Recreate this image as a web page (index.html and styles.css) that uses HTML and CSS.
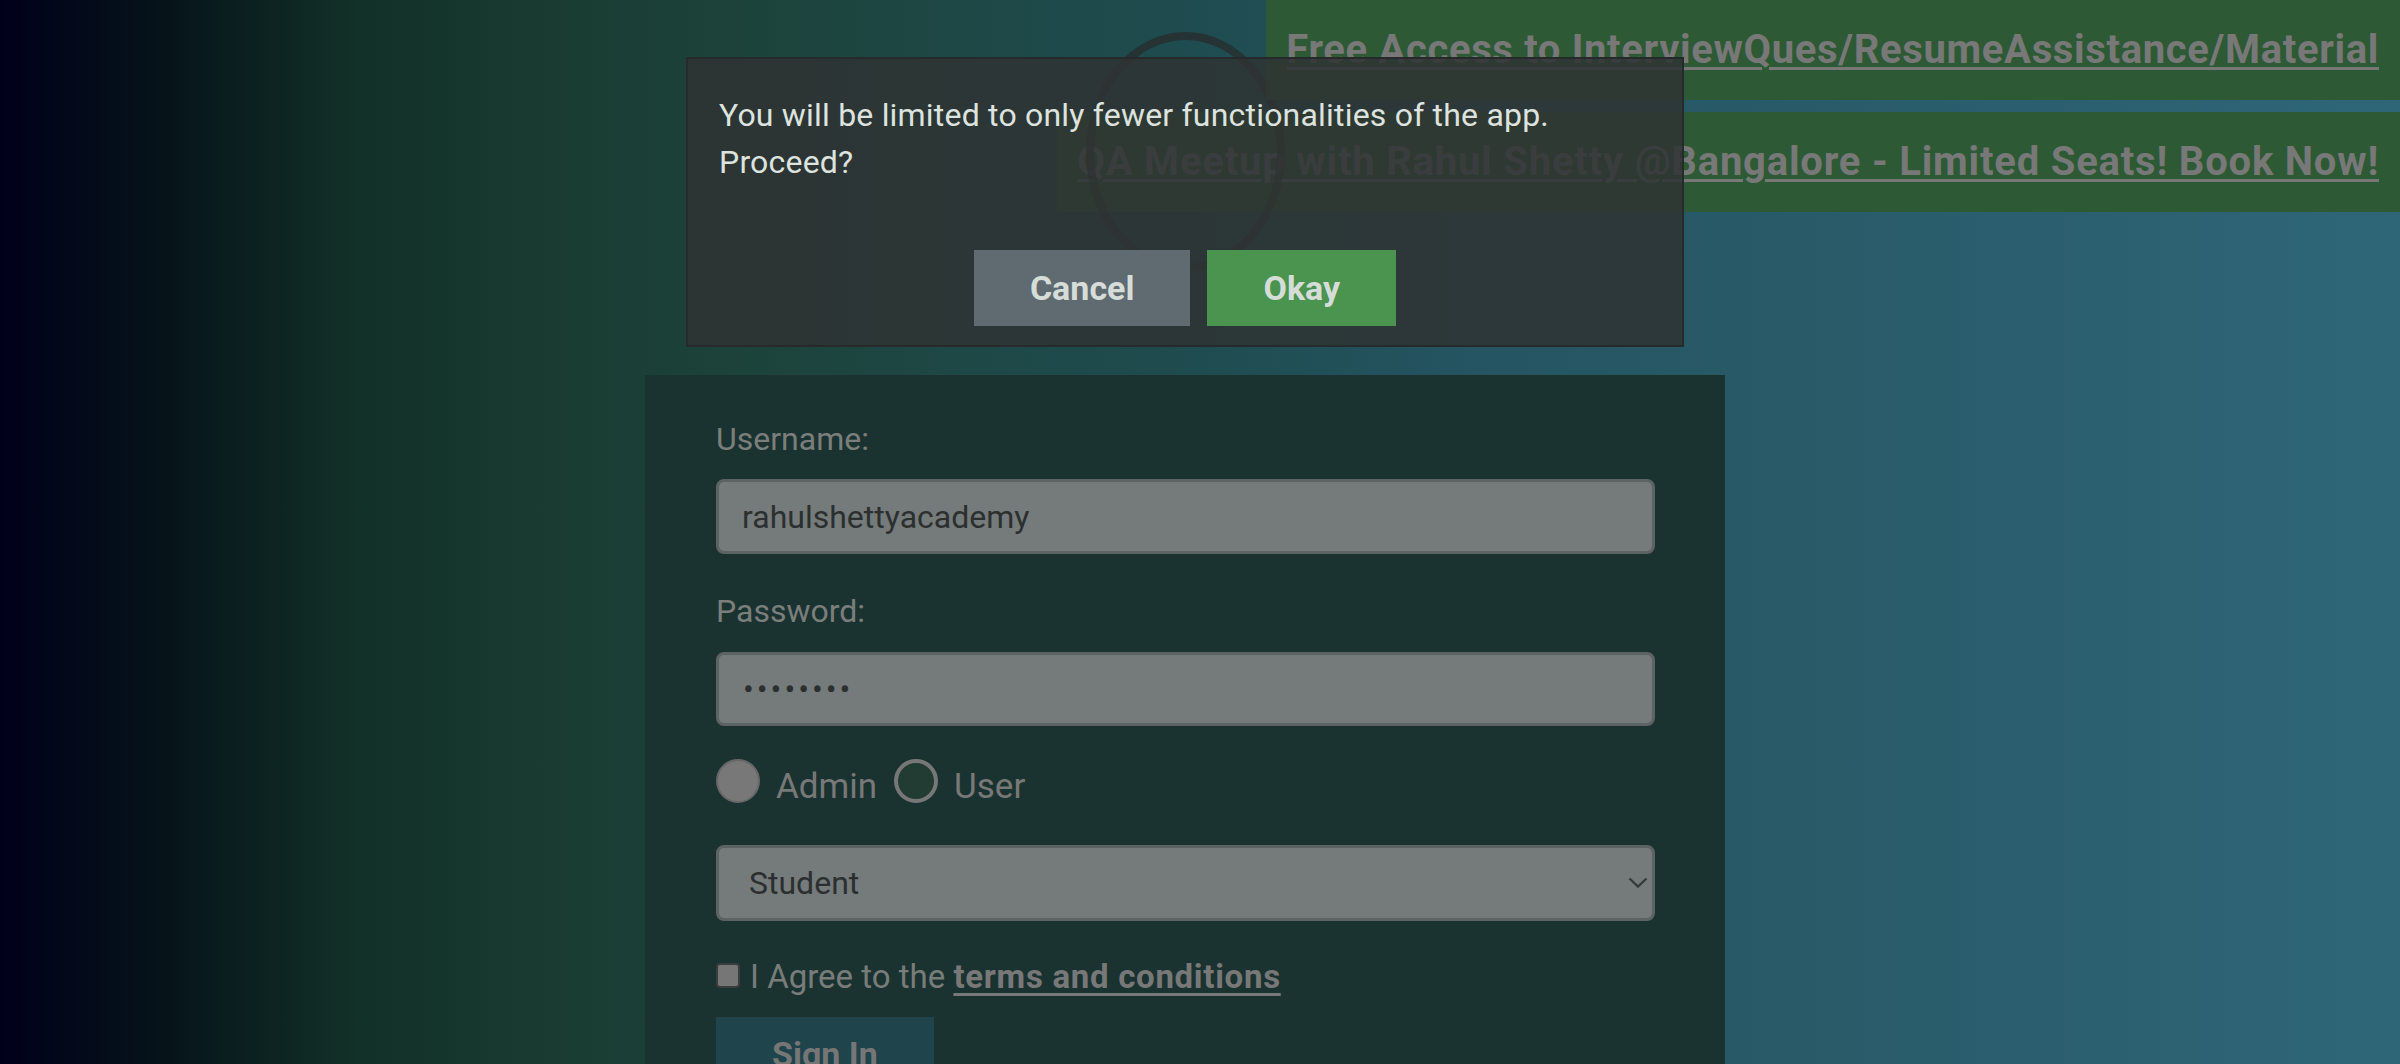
FILE: index.html
```html
<!DOCTYPE html>
<html lang="en">
<head>
<meta charset="utf-8">
<title>LoginPage Practise | Rahul Shetty Academy</title>
<link rel="stylesheet" href="styles.css">
</head>
<body>
  <div class="page">
    <div class="promos">
      <a class="promo promo-top" href="#">Free Access to InterviewQues/ResumeAssistance/Material</a>
      <a class="promo promo-meetup" href="#">QA Meetup with Rahul Shetty @Bangalore - Limited Seats! Book Now!</a>
    </div>

    <main class="main">
      <div class="logo"></div>

      <form class="login-card">
        <label class="field-label" for="username">Username:</label>
        <input class="text-input" id="username" type="text" value="rahulshettyacademy">

        <label class="field-label field-label-next" for="password">Password:</label>
        <input class="text-input text-input-pw" id="password" type="password" value="learning">

        <div class="radio-row">
          <input class="radio radio-admin" type="radio" name="role">
          <span class="radio-text">Admin</span>
          <input class="radio radio-user" type="radio" name="role">
          <span class="radio-text">User</span>
        </div>

        <div class="select-wrap">
          <select class="select">
            <option>Student</option>
            <option>Teacher</option>
            <option>Consultant</option>
          </select>
          <svg class="chevron" width="20" height="11" viewBox="0 0 20 11"><polyline points="1.5,1.5 10,9.5 18.5,1.5" fill="none" stroke="#363a3a" stroke-width="2.4"/></svg>
        </div>

        <p class="terms"><span class="checkbox"></span>I Agree to the <a class="terms-link" href="#">terms and conditions</a></p>

        <div class="actions">
          <button class="signin" type="button">Sign In</button>
        </div>
      </form>
    </main>

    <div class="modal">
      <p class="modal-text">You will be limited to only fewer functionalities of the app.<br>Proceed?</p>
      <div class="modal-buttons">
        <button class="modal-btn btn-cancel" type="button">Cancel</button>
        <button class="modal-btn btn-okay" type="button">Okay</button>
      </div>
    </div>
  </div>
</body>
</html>
```

FILE: styles.css
```css
html, body {
  margin: 0;
  padding: 0;
}

body {
  width: 2400px;
  height: 1064px;
  overflow: hidden;
  font-family: Roboto, "Noto Sans", "Liberation Sans", sans-serif;
  background: linear-gradient(to right,
    #00001a 0%,
    #06141a 7%,
    #123128 15%,
    #1a3d33 24%,
    #1c4239 30%,
    #1e4846 40%,
    #1f4c50 50%,
    #255563 62%,
    #285966 72%,
    #2b5f6f 85%,
    #2e6678 100%);
}

.page {
  position: relative;
  width: 2400px;
  height: 1064px;
  box-sizing: border-box;
  padding-right: 30px;
}

/* promo banners, top right */
.promos {
  position: absolute;
  top: 0;
  right: 0;
  display: flex;
  flex-direction: column;
  align-items: flex-end;
  gap: 12px;
}

.promo {
  display: block;
  height: 100px;
  line-height: 100px;
  padding: 0 21px 0 20px;
  background: #2d5a34;
  color: #787878;
  font-size: 40px;
  font-weight: 700;
  letter-spacing: 0.8px;
  text-decoration: underline;
  text-decoration-thickness: 3px;
  text-underline-offset: 4px;
  white-space: nowrap;
}

.promo-top {
  z-index: 3;
  letter-spacing: 0.65px;
}

.promo-meetup {
  z-index: 1;
}

/* main column */
.main {
  width: 1080px;
  margin: 0 auto;
  padding-top: 32px;
  display: flex;
  flex-direction: column;
  align-items: center;
}

.logo {
  z-index: 2;
  width: 199px;
  height: 240px;
  box-sizing: border-box;
  border: 8px solid rgba(40, 42, 42, 0.7);
  border-radius: 50%;
}

.login-card {
  width: 1080px;
  box-sizing: border-box;
  margin: 103px 0 0;
  padding: 44px 70px 60px 71px;
  background: #1b3330;
  display: flex;
  flex-direction: column;
  align-items: stretch;
}

.field-label {
  display: block;
  height: 40px;
  font-size: 32px;
  line-height: 40px;
  color: #7a7f7c;
}

.field-label-next {
  margin-top: 37px;
}

.text-input {
  display: block;
  margin: 20px 0 0;
  height: 75px;
  box-sizing: border-box;
  border: 3px solid #5d6262;
  border-radius: 8px;
  background: #757a7a;
  padding: 0 0 0 23px;
  font-family: inherit;
  font-size: 32px;
  color: #2b302f;
  outline: none;
}

.text-input-pw {
  margin-top: 21px;
  height: 74px;
  padding-left: 24px;
  letter-spacing: 3px;
  color: #2b302f;
}

/* radios */
.radio-row {
  margin-top: 33px;
  display: flex;
  align-items: flex-start;
  height: 50px;
}

.radio {
  appearance: none;
  -webkit-appearance: none;
  margin: 0;
  width: 44px;
  height: 44px;
  box-sizing: border-box;
  border-radius: 50%;
  flex: none;
}

.radio-admin {
  background: #787878;
  border: 2px solid #676767;
}

.radio-user {
  margin-left: 17px;
  background: #223b33;
  border: 4px solid #777777;
}

.radio-text {
  margin: 6px 0 0 16px;
  font-size: 35px;
  line-height: 44px;
  color: #787878;
}

/* select */
.select-wrap {
  position: relative;
  margin-top: 36px;
}

.select {
  appearance: none;
  -webkit-appearance: none;
  display: block;
  width: 100%;
  height: 76px;
  box-sizing: border-box;
  margin: 0;
  border: 3px solid #5d6262;
  border-radius: 8px;
  background: #757a7a;
  padding: 0 0 0 30px;
  font-family: inherit;
  font-size: 32px;
  color: #2b2f2f;
  outline: none;
}

.chevron {
  position: absolute;
  right: 7px;
  top: 32px;
  pointer-events: none;
}

/* terms */
.terms {
  margin: 36px 0 0;
  font-size: 33px;
  line-height: 40px;
  color: #787d7a;
}

.checkbox {
  display: inline-block;
  width: 24px;
  height: 25px;
  box-sizing: border-box;
  margin-right: 10px;
  background: #767676;
  border: 2px solid #3a3d3d;
  border-radius: 4px;
  vertical-align: baseline;
}

.terms-link {
  color: #787878;
  font-weight: 700;
  letter-spacing: 0.7px;
  text-decoration: underline;
  text-decoration-thickness: 3px;
  text-underline-offset: 5px;
}

.actions {
  margin-top: 20px;
  display: flex;
}

.signin {
  border: none;
  margin: 0;
  padding: 17px 56px;
  background: #1f444b;
  color: #767676;
  font-family: inherit;
  font-size: 34px;
  font-weight: 700;
  line-height: 40px;
}

/* modal dialog */
.modal {
  position: absolute;
  z-index: 10;
  left: 686px;
  top: 57px;
  width: 998px;
  height: 290px;
  box-sizing: border-box;
  border: 2px solid #262a2a;
  background: rgba(47, 51, 51, 0.86);
  padding: 33px 31px 0;
}

.modal-text {
  margin: 0;
  font-size: 32px;
  line-height: 47px;
  letter-spacing: 0.2px;
  color: #dde3df;
}

.modal-buttons {
  margin-top: 64px;
  display: flex;
  justify-content: center;
  gap: 17px;
}

.modal-btn {
  height: 76px;
  margin: 0;
  border: none;
  padding: 0 56px;
  font-family: inherit;
  font-size: 34px;
  font-weight: 700;
  color: #d6ddd9;
}

.btn-cancel {
  background: #5f6b70;
}

.btn-okay {
  background: #4a944f;
}
```
